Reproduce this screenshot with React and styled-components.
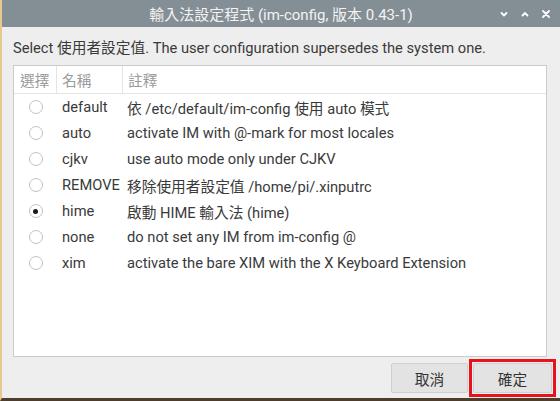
import styled, { createGlobalStyle } from "styled-components";

const GlobalStyle = createGlobalStyle`
  html, body {
    margin: 0;
    padding: 0;
    background: #eeeeee;
  }
  body {
    font-family: Roboto, "Noto Sans CJK TC", sans-serif;
  }
`;

const Window = styled.div`
  width: 560px;
  height: 401px;
  box-sizing: border-box;
  display: flex;
  flex-direction: column;
  background: #eeeeee;
  border-left: 2px solid #e6c98e;
  border-bottom: 3px solid #4d3d2a;
  overflow: hidden;
`;

const TitleBar = styled.div`
  height: 27px;
  flex: none;
  background: #848e95;
  position: relative;
  display: flex;
  align-items: center;
  justify-content: center;
  color: #f3f3f3;
  font-size: 15px;
`;

const Controls = styled.div`
  position: absolute;
  right: 9px;
  top: 0;
  height: 27px;
  display: flex;
  align-items: center;
  gap: 11px;
`;

const Body = styled.div`
  flex: 1;
  display: flex;
  flex-direction: column;
  padding: 12px 13px 0 11px;
`;

const Intro = styled.div`
  font-size: 14.7px;
  color: #3a3a3a;
  line-height: 18px;
  margin-bottom: 8px;
`;

const List = styled.div`
  height: 292px;
  box-sizing: border-box;
  background: #ffffff;
  border: 1px solid #cbcbcb;
  display: flex;
  flex-direction: column;
`;

const Row = styled.div`
  display: grid;
  grid-template-columns: 42px 66px 1fr;
  height: ${(p) => (p.$header ? "27px" : "26px")};
  align-items: center;
  flex: none;
  border-bottom: ${(p) => (p.$header ? "1px solid #e4e4e4" : "none")};
  font-size: 14.7px;
  color: ${(p) => (p.$header ? "#9a9a9a" : "#3a3a3a")};
`;

const Cell = styled.div`
  height: 100%;
  display: flex;
  align-items: center;
  padding-left: ${(p) => p.$pad || "5px"};
  border-left: ${(p) => (p.$sep ? "1px solid #e4e4e4" : "none")};
  white-space: nowrap;
`;

const RadioCell = styled.div`
  display: flex;
  align-items: center;
  justify-content: center;
  padding-left: 1px;
`;

const Radio = styled.span`
  width: 12px;
  height: 12px;
  border-radius: 50%;
  border: 1px solid #c2c2c2;
  background: #ffffff;
  display: flex;
  align-items: center;
  justify-content: center;
  &::after {
    content: "";
    width: 5px;
    height: 5px;
    border-radius: 50%;
    background: ${(p) => (p.$on ? "#1a1a1a" : "transparent")};
  }
`;

const Buttons = styled.div`
  display: flex;
  justify-content: flex-end;
  gap: 5px;
  padding-top: 6px;
  margin-right: -5px;
`;

const Button = styled.button`
  width: ${(p) => p.$w || "77px"};
  height: 30px;
  box-sizing: border-box;
  border: 1px solid #cfcfcf;
  border-radius: 2px;
  background: #e3e3e3;
  color: #333333;
  font-family: Roboto, "Noto Sans CJK TC", sans-serif;
  font-size: 14.7px;
  padding: 0;
`;

const Highlight = styled.div`
  border: 3px solid #e8121c;
  padding: 1px;
  margin: -4px;
  display: flex;
`;

const rows = [
  ["default", "依 /etc/default/im-config 使用 auto 模式"],
  ["auto", "activate IM with @-mark for most locales"],
  ["cjkv", "use auto mode only under CJKV"],
  ["REMOVE", "移除使用者設定值 /home/pi/.xinputrc"],
  ["hime", "啟動 HIME 輸入法 (hime)"],
  ["none", "do not set any IM from im-config @"],
  ["xim", "activate the bare XIM with the X Keyboard Extension"],
];

const Icon = ({ children }) => (
  <svg width="10" height="10" viewBox="0 0 10 10" fill="none" stroke="#ffffff" strokeWidth="1.8" strokeLinecap="round">
    {children}
  </svg>
);

export default function App() {
  return (
    <>
      <GlobalStyle />
      <Window>
        <TitleBar>
          輸入法設定程式 (im-config, 版本 0.43-1)
          <Controls>
            <Icon><path d="M2.5 4 L5 6.5 L7.5 4" /></Icon>
            <Icon><path d="M2.5 6.5 L5 4 L7.5 6.5" /></Icon>
            <Icon><path d="M2 2 L8 8 M8 2 L2 8" /></Icon>
          </Controls>
        </TitleBar>
        <Body>
          <Intro>Select 使用者設定值. The user configuration supersedes the system one.</Intro>
          <List>
            <Row $header>
              <Cell $pad="6px">選擇</Cell>
              <Cell $sep>名稱</Cell>
              <Cell $sep>註釋</Cell>
            </Row>
            {rows.map(([name, desc]) => (
              <Row key={name}>
                <RadioCell><Radio $on={name === "hime"} /></RadioCell>
                <Cell $pad="6px">{name}</Cell>
                <Cell>{desc}</Cell>
              </Row>
            ))}
          </List>
          <Buttons>
            <Button $w="77px">取消</Button>
            <Highlight><Button $w="79px">確定</Button></Highlight>
          </Buttons>
        </Body>
      </Window>
    </>
  );
}
